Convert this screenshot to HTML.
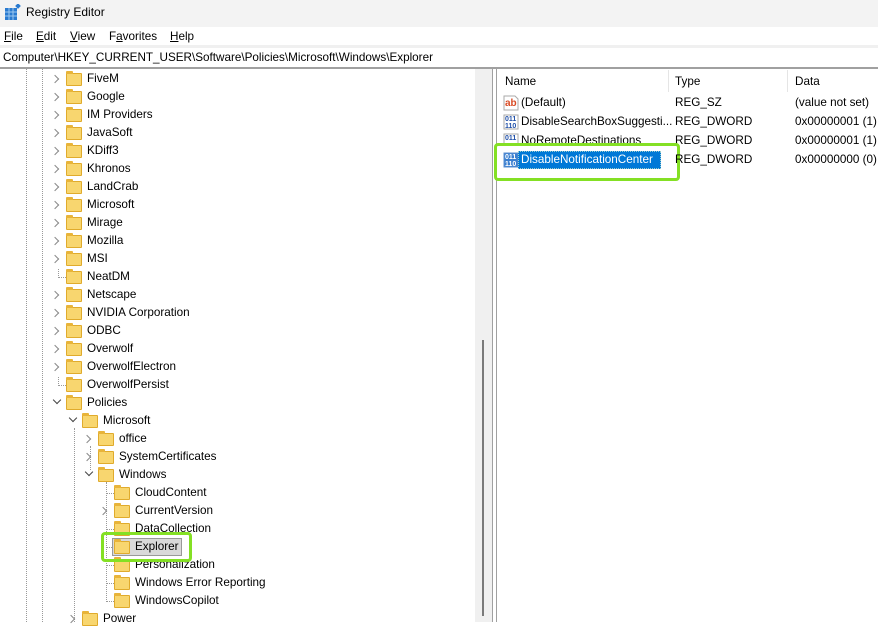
<!DOCTYPE html>
<html><head><meta charset="utf-8">
<style>
*{margin:0;padding:0;box-sizing:border-box}
body{width:878px;height:622px;overflow:hidden;background:#fff;font-family:"Liberation Sans",sans-serif;font-size:11.7px;color:#000;position:relative}
.a{position:absolute;white-space:nowrap}
.t{position:absolute;line-height:18px;height:18px;white-space:nowrap}
.f{position:absolute;width:16px;height:13px;background:#f8d66f;border:1px solid #e0ab2c;border-radius:1px}
.f:before{content:"";position:absolute;left:-1px;top:-3px;width:7px;height:3px;background:#e8b43a;border-radius:1px 1px 0 0}
.c{position:absolute;width:6px;height:6px;border-right:1.3px solid #888;border-bottom:1.3px solid #888;transform:rotate(-45deg)}
.d{position:absolute;width:6px;height:6px;border-right:1.3px solid #444;border-bottom:1.3px solid #444;transform:rotate(45deg)}
.vl{position:absolute;border-left:1px dotted #999;width:0}
.hl{position:absolute;border-top:1px dotted #999;height:0}
.u{text-decoration:underline}
</style></head><body>
<div class="a" style="left:0;top:0;width:878px;height:27px;background:#f3f3f3"></div>
<svg class="a" style="left:5px;top:4px" width="16" height="16"><rect x="0" y="4" width="12" height="12" fill="#2b7bd0"/><path d="M4 4v12M8 4v12M0 8h12M0 12h12" stroke="#9cc8f0" stroke-width="1"/><rect x="11" y="0" width="4" height="4" fill="#2b7bd0" transform="rotate(45 13 2)"/></svg>
<div class="a" style="left:26px;top:5px;font-size:12px">Registry Editor</div>
<div class="a" style="left:4px;top:30px"><span class="u">F</span>ile</div>
<div class="a" style="left:36px;top:30px"><span class="u">E</span>dit</div>
<div class="a" style="left:70px;top:30px"><span class="u">V</span>iew</div>
<div class="a" style="left:109px;top:30px">F<span class="u">a</span>vorites</div>
<div class="a" style="left:170px;top:30px"><span class="u">H</span>elp</div>
<div class="a" style="left:0;top:45px;width:878px;height:3px;background:#f0f0f0"></div>
<div class="a" style="left:3px;top:51px">Computer\HKEY_CURRENT_USER\Software\Policies\Microsoft\Windows\Explorer</div>
<div class="a" style="left:0;top:67px;width:878px;height:2px;background:#a0a0a0"></div>
<div class="a" style="left:475px;top:69px;width:17px;height:553px;background:#f0f0f0"></div>
<div class="a" style="left:482px;top:340px;width:2px;height:276px;background:#7a7a7a"></div>
<div class="a" style="left:492px;top:69px;width:1px;height:553px;background:#a0a0a0"></div>
<div class="a" style="left:496px;top:69px;width:1px;height:553px;background:#a0a0a0"></div>
<div class="vl" style="left:26px;top:69px;height:553px"></div>
<div class="vl" style="left:42px;top:69px;height:553px"></div>
<div class="vl" style="left:58px;top:269px;height:9px"></div>
<div class="vl" style="left:58px;top:377px;height:9px"></div>
<div class="vl" style="left:74px;top:428px;height:194px"></div>
<div class="vl" style="left:90px;top:446px;height:24px"></div>
<div class="vl" style="left:106px;top:482px;height:118px"></div>
<div class="hl" style="left:58px;top:277px;width:8px"></div>
<div class="hl" style="left:58px;top:385px;width:8px"></div>
<div class="hl" style="left:106px;top:493px;width:8px"></div>
<div class="hl" style="left:106px;top:529px;width:8px"></div>
<div class="hl" style="left:106px;top:547px;width:8px"></div>
<div class="hl" style="left:106px;top:565px;width:8px"></div>
<div class="hl" style="left:106px;top:583px;width:8px"></div>
<div class="hl" style="left:106px;top:601px;width:8px"></div>

<div class="c" style="left:52px;top:76px"></div><div class="f" style="left:66px;top:73px"></div><div class="t" style="left:87px;top:70px">FiveM</div>
<div class="c" style="left:52px;top:94px"></div><div class="f" style="left:66px;top:91px"></div><div class="t" style="left:87px;top:88px">Google</div>
<div class="c" style="left:52px;top:112px"></div><div class="f" style="left:66px;top:109px"></div><div class="t" style="left:87px;top:106px">IM Providers</div>
<div class="c" style="left:52px;top:130px"></div><div class="f" style="left:66px;top:127px"></div><div class="t" style="left:87px;top:124px">JavaSoft</div>
<div class="c" style="left:52px;top:148px"></div><div class="f" style="left:66px;top:145px"></div><div class="t" style="left:87px;top:142px">KDiff3</div>
<div class="c" style="left:52px;top:166px"></div><div class="f" style="left:66px;top:163px"></div><div class="t" style="left:87px;top:160px">Khronos</div>
<div class="c" style="left:52px;top:184px"></div><div class="f" style="left:66px;top:181px"></div><div class="t" style="left:87px;top:178px">LandCrab</div>
<div class="c" style="left:52px;top:202px"></div><div class="f" style="left:66px;top:199px"></div><div class="t" style="left:87px;top:196px">Microsoft</div>
<div class="c" style="left:52px;top:220px"></div><div class="f" style="left:66px;top:217px"></div><div class="t" style="left:87px;top:214px">Mirage</div>
<div class="c" style="left:52px;top:238px"></div><div class="f" style="left:66px;top:235px"></div><div class="t" style="left:87px;top:232px">Mozilla</div>
<div class="c" style="left:52px;top:256px"></div><div class="f" style="left:66px;top:253px"></div><div class="t" style="left:87px;top:250px">MSI</div>
<div class="f" style="left:66px;top:271px"></div><div class="t" style="left:87px;top:268px">NeatDM</div>
<div class="c" style="left:52px;top:292px"></div><div class="f" style="left:66px;top:289px"></div><div class="t" style="left:87px;top:286px">Netscape</div>
<div class="c" style="left:52px;top:310px"></div><div class="f" style="left:66px;top:307px"></div><div class="t" style="left:87px;top:304px">NVIDIA Corporation</div>
<div class="c" style="left:52px;top:328px"></div><div class="f" style="left:66px;top:325px"></div><div class="t" style="left:87px;top:322px">ODBC</div>
<div class="c" style="left:52px;top:346px"></div><div class="f" style="left:66px;top:343px"></div><div class="t" style="left:87px;top:340px">Overwolf</div>
<div class="c" style="left:52px;top:364px"></div><div class="f" style="left:66px;top:361px"></div><div class="t" style="left:87px;top:358px">OverwolfElectron</div>
<div class="f" style="left:66px;top:379px"></div><div class="t" style="left:87px;top:376px">OverwolfPersist</div>
<div class="d" style="left:54px;top:397px"></div><div class="f" style="left:66px;top:397px"></div><div class="t" style="left:87px;top:394px">Policies</div>
<div class="d" style="left:70px;top:415px"></div><div class="f" style="left:82px;top:415px"></div><div class="t" style="left:103px;top:412px">Microsoft</div>
<div class="c" style="left:84px;top:436px"></div><div class="f" style="left:98px;top:433px"></div><div class="t" style="left:119px;top:430px">office</div>
<div class="c" style="left:84px;top:454px"></div><div class="f" style="left:98px;top:451px"></div><div class="t" style="left:119px;top:448px">SystemCertificates</div>
<div class="d" style="left:86px;top:469px"></div><div class="f" style="left:98px;top:469px"></div><div class="t" style="left:119px;top:466px">Windows</div>
<div class="f" style="left:114px;top:487px"></div><div class="t" style="left:135px;top:484px">CloudContent</div>
<div class="c" style="left:100px;top:508px"></div><div class="f" style="left:114px;top:505px"></div><div class="t" style="left:135px;top:502px">CurrentVersion</div>
<div class="f" style="left:114px;top:523px"></div><div class="t" style="left:135px;top:520px">DataCollection</div>
<div class="a" style="left:112px;top:538px;width:70px;height:18px;background:#d9d9d9;border:1px solid #999"></div>
<div class="f" style="left:114px;top:541px"></div><div class="t" style="left:135px;top:538px">Explorer</div>
<div class="f" style="left:114px;top:559px"></div><div class="t" style="left:135px;top:556px">Personalization</div>
<div class="f" style="left:114px;top:577px"></div><div class="t" style="left:135px;top:574px">Windows Error Reporting</div>
<div class="f" style="left:114px;top:595px"></div><div class="t" style="left:135px;top:592px">WindowsCopilot</div>
<div class="c" style="left:68px;top:616px"></div><div class="f" style="left:82px;top:613px"></div><div class="t" style="left:103px;top:610px">Power</div>
<div class="a" style="left:101px;top:532px;width:91px;height:30px;border:3px solid #84e024;border-radius:4px"></div>

<div class="a" style="left:668px;top:70px;width:1px;height:22px;background:#e5e5e5"></div>
<div class="a" style="left:787px;top:70px;width:1px;height:22px;background:#e5e5e5"></div>
<div class="a" style="left:505px;top:75px">Name</div>
<div class="a" style="left:675px;top:75px">Type</div>
<div class="a" style="left:795px;top:75px">Data</div>
<svg class="a" style="left:503px;top:95px" width="16" height="16"><path d="M1 1h11l3 3v11H1z" fill="#fff" stroke="#aaa"/><text x="2" y="11" font-size="10" font-weight="bold" fill="#d84a24" font-family="Liberation Sans">ab</text></svg>
<div class="a" style="left:521px;top:96px">(Default)</div><div class="a" style="left:675px;top:96px">REG_SZ</div><div class="a" style="left:795px;top:96px">(value not set)</div>
<svg class="a" style="left:503px;top:114px" width="16" height="16"><rect x="1" y="1" width="14" height="14" fill="#fff" stroke="#aaa"/><text x="2" y="7" font-size="7" font-weight="bold" fill="#1f4fa8" font-family="Liberation Sans">011</text><text x="2" y="14" font-size="7" font-weight="bold" fill="#1f4fa8" font-family="Liberation Sans">110</text></svg>
<div class="a" style="left:521px;top:115px">DisableSearchBoxSuggesti...</div><div class="a" style="left:675px;top:115px">REG_DWORD</div><div class="a" style="left:795px;top:115px">0x00000001 (1)</div>
<svg class="a" style="left:503px;top:133px" width="16" height="16"><rect x="1" y="1" width="14" height="14" fill="#fff" stroke="#aaa"/><text x="2" y="7" font-size="7" font-weight="bold" fill="#1f4fa8" font-family="Liberation Sans">011</text></svg>
<div class="a" style="left:521px;top:134px">NoRemoteDestinations</div><div class="a" style="left:675px;top:134px">REG_DWORD</div><div class="a" style="left:795px;top:134px">0x00000001 (1)</div>
<div class="a" style="left:494px;top:143px;width:186px;height:38px;background:#fff;border:3px solid #84e024;border-radius:4px"></div>
<svg class="a" style="left:503px;top:152px" width="16" height="16"><rect x="1" y="1" width="14" height="14" fill="#3a7fd0" stroke="#5b8fd0"/><text x="2" y="7" font-size="7" font-weight="bold" fill="#fff" font-family="Liberation Sans">011</text><text x="2" y="14" font-size="7" font-weight="bold" fill="#fff" font-family="Liberation Sans">110</text></svg>
<div class="a" style="left:518px;top:151px;width:143px;height:18px;background:#0078d7;border:1px dotted #9cc"></div>
<div class="a" style="left:521px;top:153px;color:#fff">DisableNotificationCenter</div>
<div class="a" style="left:675px;top:153px">REG_DWORD</div><div class="a" style="left:795px;top:153px">0x00000000 (0)</div>
</body></html>
